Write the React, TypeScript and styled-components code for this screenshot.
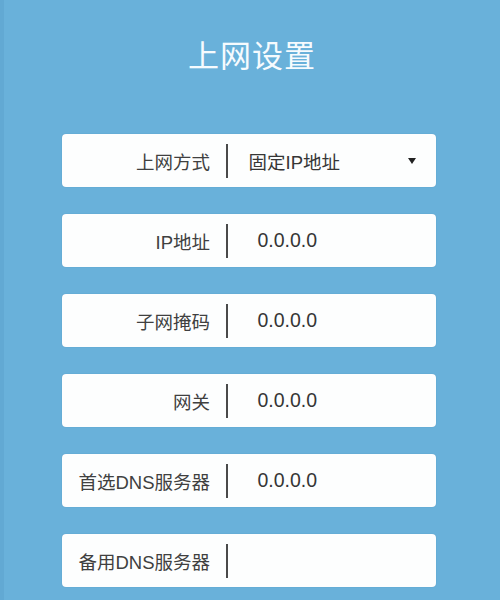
import React from "react";
import styled, { createGlobalStyle } from "styled-components";

const GlobalStyle = createGlobalStyle`
  html, body {
    margin: 0;
    padding: 0;
    background: #69b1da;
  }
  body {
    font-family: "Liberation Sans", "Noto Sans CJK SC", sans-serif;
  }
`;

const Page = styled.div`
  height: 600px;
  background: #69b1da;
  border-left: 4px solid #62a9d3;
  box-sizing: border-box;
  overflow: hidden;
`;

const Title = styled.h1`
  margin: 0;
  padding-top: 36px;
  font-family: "Noto Sans CJK SC", sans-serif;
  font-weight: 400;
  font-size: 31px;
  line-height: 36px;
  letter-spacing: 1px;
  color: #f6fbfe;
  text-align: center;
`;

const List = styled.div`
  display: flex;
  flex-direction: column;
  gap: 27px;
  margin-top: 62px;
  padding-left: 58px;
  width: 374px;
`;

const Card = styled.div`
  display: flex;
  align-items: center;
  height: 53px;
  background: #fdfefe;
  border-radius: 4px;
  box-shadow: 0 0 1px rgba(40, 90, 130, 0.4);
  color: #404040;
  font-size: 18.5px;
`;

const Label = styled.div`
  width: 148px;
  text-align: right;
  white-space: nowrap;
`;

const Divider = styled.div`
  width: 1.5px;
  height: 34px;
  margin-left: 16px;
  background: #4a4a4a;
`;

const Value = styled.div<{ $select?: boolean }>`
  flex: 1;
  display: flex;
  align-items: center;
  justify-content: space-between;
  margin-left: ${(p) => (p.$select ? "21px" : "30px")};
  padding-right: 20px;
  color: #363636;
  font-size: ${(p) => (p.$select ? "18.5px" : "19.5px")};
`;

const Caret = styled.span`
  width: 0;
  height: 0;
  border-left: 4.5px solid transparent;
  border-right: 4.5px solid transparent;
  border-top: 6px solid #222;
`;

const fields: { label: string; value: string; select?: boolean }[] = [
  { label: "上网方式", value: "固定IP地址", select: true },
  { label: "IP地址", value: "0.0.0.0" },
  { label: "子网掩码", value: "0.0.0.0" },
  { label: "网关", value: "0.0.0.0" },
  { label: "首选DNS服务器", value: "0.0.0.0" },
  { label: "备用DNS服务器", value: "" },
];

export default function App() {
  return (
    <Page>
      <GlobalStyle />
      <Title>上网设置</Title>
      <List>
        {fields.map((f) => (
          <Card key={f.label}>
            <Label>{f.label}</Label>
            <Divider />
            <Value $select={f.select}>
              <span>{f.value}</span>
              {f.select && <Caret />}
            </Value>
          </Card>
        ))}
      </List>
    </Page>
  );
}
